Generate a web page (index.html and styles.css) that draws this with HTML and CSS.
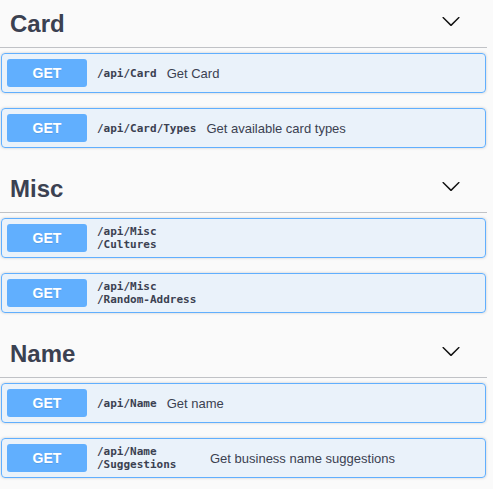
FILE: index.html
```
<!DOCTYPE html>
<html lang="en">
<head>
    <meta charset="UTF-8">
    <meta name="viewport" content="width=device-width, initial-scale=1.0">
    <title>API Docs</title>
    <link rel="stylesheet" href="styles.css">
</head>
<body>
    <div class="wrapper">
        <section class="tag-section">
            <h3 class="tag">
                <span class="tag-name">Card</span>
                <svg class="arrow" width="20" height="20" viewBox="0 0 20 20"><path d="M17.418 6.109c.272-.268.709-.268.979 0s.271.701 0 .969l-7.908 7.83c-.27.268-.707.268-.979 0l-7.908-7.83c-.27-.268-.27-.701 0-.969.271-.268.709-.268.979 0L10 13.25l7.418-7.141z"/></svg>
            </h3>
            <div class="opblock">
                <div class="summary">
                    <span class="method">GET</span>
                    <span class="path">/api<wbr>/Card</span>
                    <span class="desc">Get Card</span>
                </div>
            </div>
            <div class="opblock">
                <div class="summary">
                    <span class="method">GET</span>
                    <span class="path">/api<wbr>/Card<wbr>/Types</span>
                    <span class="desc">Get available card types</span>
                </div>
            </div>
        </section>

        <section class="tag-section">
            <h3 class="tag">
                <span class="tag-name">Misc</span>
                <svg class="arrow" width="20" height="20" viewBox="0 0 20 20"><path d="M17.418 6.109c.272-.268.709-.268.979 0s.271.701 0 .969l-7.908 7.83c-.27.268-.707.268-.979 0l-7.908-7.83c-.27-.268-.27-.701 0-.969.271-.268.709-.268.979 0L10 13.25l7.418-7.141z"/></svg>
            </h3>
            <div class="opblock">
                <div class="summary">
                    <span class="method">GET</span>
                    <span class="path">/api<wbr>/Misc<wbr>/Cultures</span>
                </div>
            </div>
            <div class="opblock">
                <div class="summary">
                    <span class="method">GET</span>
                    <span class="path">/api<wbr>/Misc<wbr>/Random-Address</span>
                </div>
            </div>
        </section>

        <section class="tag-section">
            <h3 class="tag">
                <span class="tag-name">Name</span>
                <svg class="arrow" width="20" height="20" viewBox="0 0 20 20"><path d="M17.418 6.109c.272-.268.709-.268.979 0s.271.701 0 .969l-7.908 7.83c-.27.268-.707.268-.979 0l-7.908-7.830c-.27-.268-.27-.701 0-.969.271-.268.709-.268.979 0L10 13.25l7.418-7.141z"/></svg>
            </h3>
            <div class="opblock">
                <div class="summary">
                    <span class="method">GET</span>
                    <span class="path">/api<wbr>/Name</span>
                    <span class="desc">Get name</span>
                </div>
            </div>
            <div class="opblock">
                <div class="summary">
                    <span class="method">GET</span>
                    <span class="path">/api<wbr>/Name<wbr>/Suggestions</span>
                    <span class="desc">Get business name suggestions</span>
                </div>
            </div>
        </section>
    </div>
</body>
</html>
```

FILE: styles.css
```
body {
    margin: 0;
    padding: 0;
    background: #fafafa;
    font-family: 'Liberation Sans', Arial, sans-serif;
    color: #3b4151;
    overflow: hidden;
}
.wrapper {
    padding: 0 6px 0 0;
}
.tag-section {
    padding-bottom: 2px;
}
.tag {
    display: flex;
    align-items: flex-start;
    margin: 0 0 5px;
    padding: 10px 26px 10px 10px;
    font-size: 24px;
    line-height: 27px;
    font-weight: bold;
    color: #3b4151;
    border-bottom: 1px solid rgba(59, 65, 81, 0.3);
}
.tag-name {
    flex: 1;
}
.arrow {
    margin-top: 1px;
    fill: #111;
}
.opblock {
    margin: 0 1px 15px;
    border: 1px solid #61affe;
    border-radius: 4px;
    background: rgba(97, 175, 254, 0.1);
    box-shadow: 0 0 3px rgba(0, 0, 0, 0.19);
}
.summary {
    display: flex;
    align-items: center;
    padding: 5px;
}
.method {
    flex-shrink: 0;
    min-width: 80px;
    padding: 6px 0;
    border-radius: 3px;
    background: #61affe;
    color: #fff;
    font-size: 14px;
    line-height: 16px;
    font-weight: bold;
    text-align: center;
    text-shadow: 0 1px 0 rgba(0, 0, 0, 0.1);
}
.path {
    flex: 0 1 auto;
    max-width: 103px;
    padding: 0 10px;
    font-family: 'DejaVu Sans Mono', 'Liberation Mono', monospace;
    font-size: 11px;
    line-height: 13px;
    font-weight: bold;
    color: #3b4151;
}
.desc {
    flex: 1;
    font-size: 13px;
    color: #3b4151;
}
```
